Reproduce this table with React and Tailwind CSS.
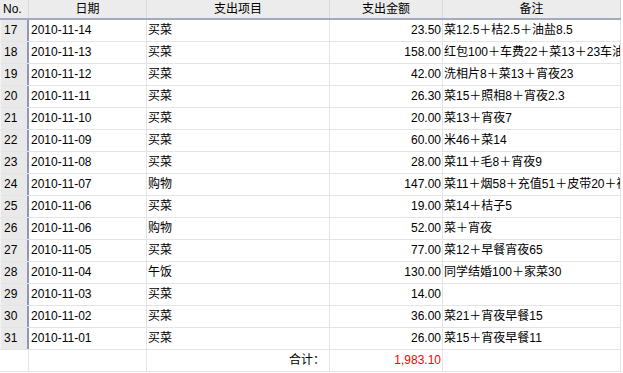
const rows = [
  ["17", "2010-11-14", "买菜", "23.50", "菜12.5＋桔2.5＋油盐8.5"],
  ["18", "2010-11-13", "买菜", "158.00", "红包100＋车费22＋菜13＋23车油"],
  ["19", "2010-11-12", "买菜", "42.00", "洗相片8＋菜13＋宵夜23"],
  ["20", "2010-11-11", "买菜", "26.30", "菜15＋照相8＋宵夜2.3"],
  ["21", "2010-11-10", "买菜", "20.00", "菜13＋宵夜7"],
  ["22", "2010-11-09", "买菜", "60.00", "米46＋菜14"],
  ["23", "2010-11-08", "买菜", "28.00", "菜11＋毛8＋宵夜9"],
  ["24", "2010-11-07", "购物", "147.00", "菜11＋烟58＋充值51＋皮带20＋袜"],
  ["25", "2010-11-06", "买菜", "19.00", "菜14＋桔子5"],
  ["26", "2010-11-06", "购物", "52.00", "菜＋宵夜"],
  ["27", "2010-11-05", "买菜", "77.00", "菜12＋早餐宵夜65"],
  ["28", "2010-11-04", "午饭", "130.00", "同学结婚100＋家菜30"],
  ["29", "2010-11-03", "买菜", "14.00", ""],
  ["30", "2010-11-02", "买菜", "36.00", "菜21＋宵夜早餐15"],
  ["31", "2010-11-01", "买菜", "26.00", "菜15＋宵夜早餐11"],
];

const font = {
  fontFamily: '"Liberation Sans", "Noto Sans CJK SC", sans-serif',
};

export default function App() {
  return (
    <div
      className="w-[623px] h-[373px] bg-white text-[12px] text-black overflow-hidden"
      style={font}
    >
      <div className="w-[621px]">
        {/* HEADER */}
        <div className="flex h-[20px] bg-[#ececec] border-b-2 border-[#a3abc4] leading-[18px]">
          <div className="w-[29px] pl-[3px] border-r border-[#d8d8d8]">No.</div>
          <div className="w-[118px] text-center border-r border-[#d8d8d8]">日期</div>
          <div className="w-[183px] text-center border-r border-[#d8d8d8]">支出项目</div>
          <div className="w-[113px] text-center border-r border-[#d8d8d8]">支出金额</div>
          <div className="w-[178px] text-center border-r border-[#d0d0d0]">备注</div>
        </div>

        {/* ROWS */}
        {rows.map((r) => (
          <div key={r[0]} className="flex h-[22px] leading-[21px] border-b border-[#e4e4e4]">
            <div className="w-[29px] pl-[3px] bg-[#e9e9e9] border-r-2 border-[#8e97b6] border-l border-l-[#f4f4f4]">
              {r[0]}
            </div>
            <div className="w-[118px] pl-[2px] border-r border-[#e4e4e4]">{r[1]}</div>
            <div className="w-[183px] pl-[1px] border-r border-[#e4e4e4]">{r[2]}</div>
            <div className="w-[113px] pr-[1px] text-right border-r border-[#e4e4e4]">{r[3]}</div>
            <div className="w-[178px] pl-[1px] border-r border-[#e4e4e4] whitespace-nowrap overflow-hidden">
              {r[4]}
            </div>
          </div>
        ))}

        {/* TOTAL */}
        <div className="flex h-[22px] leading-[21px] border-b border-[#e4e4e4]">
          <div className="w-[29px] border-r border-[#e4e4e4]"></div>
          <div className="w-[118px] border-r border-[#e4e4e4]"></div>
          <div className="w-[183px] pr-[4px] text-right border-r border-[#e4e4e4]">合计：</div>
          <div className="w-[113px] pr-[1px] text-right text-[#ff0000] border-r border-[#e4e4e4]">
            1,983.10
          </div>
          <div className="w-[178px] border-r border-[#e4e4e4]"></div>
        </div>
      </div>
    </div>
  );
}
